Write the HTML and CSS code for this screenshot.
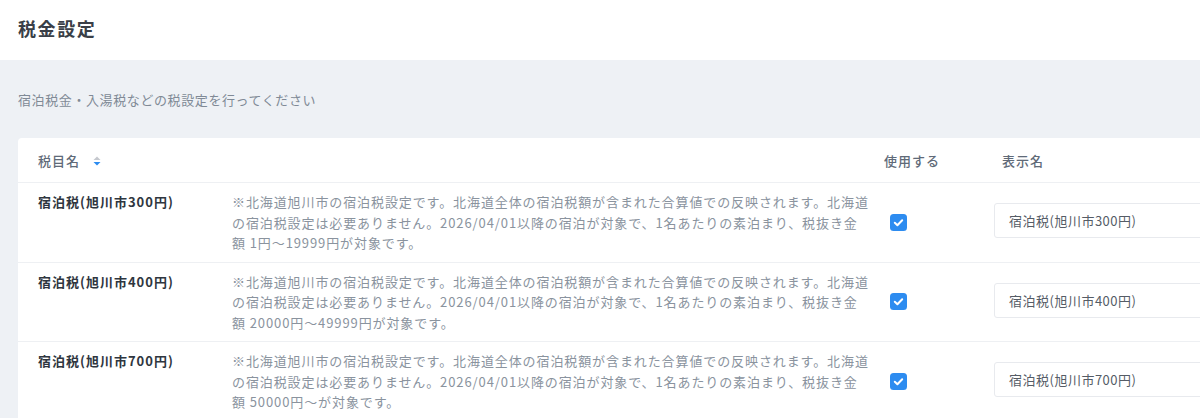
FILE: index.html
```html
<!DOCTYPE html>
<html lang="ja">
<head>
<meta charset="utf-8">
<title>税金設定</title>
<link rel="stylesheet" href="styles.css">
</head>
<body>
<header class="page-head">
  <h1 class="page-title">税金設定</h1>
</header>
<main class="content">
  <p class="lead">宿泊税金・入湯税などの税設定を行ってください</p>
  <section class="card">
    <div class="row head">
      <div class="th th-name">税目名
        <svg class="sort" width="8" height="10" viewBox="0 0 8 10"><path d="M4 0.5 L7.5 4 L0.5 4 Z" fill="#c5c8ce"/><path d="M0.5 6 L7.5 6 L4 9.5 Z" fill="#2d8cf0"/></svg>
      </div>
      <div class="th"></div>
      <div class="th">使用する</div>
      <div class="th th-disp">表示名</div>
    </div>

    <div class="row">
      <div class="name">宿泊税(旭川市300円)</div>
      <div class="desc">※北海道旭川市の宿泊税設定です。北海道全体の宿泊税額が含まれた合算値での反映されます。北海道の宿泊税設定は必要ありません。2026/04/01以降の宿泊が対象で、1名あたりの素泊まり、税抜き金額 1円〜19999円が対象です。</div>
      <div class="use"><span class="check"><svg width="17" height="17" viewBox="0 0 17 17"><rect width="17" height="17" rx="3.5" fill="#2d8cf0"/><path d="M4.8 8.8 L7.4 11.2 L12.2 6.2" fill="none" stroke="#fff" stroke-width="2" stroke-linecap="round" stroke-linejoin="round"/></svg></span></div>
      <div class="disp"><div class="input">宿泊税(旭川市300円)</div></div>
    </div>

    <div class="row">
      <div class="name">宿泊税(旭川市400円)</div>
      <div class="desc">※北海道旭川市の宿泊税設定です。北海道全体の宿泊税額が含まれた合算値での反映されます。北海道の宿泊税設定は必要ありません。2026/04/01以降の宿泊が対象で、1名あたりの素泊まり、税抜き金額 20000円〜49999円が対象です。</div>
      <div class="use"><span class="check"><svg width="17" height="17" viewBox="0 0 17 17"><rect width="17" height="17" rx="3.5" fill="#2d8cf0"/><path d="M4.8 8.8 L7.4 11.2 L12.2 6.2" fill="none" stroke="#fff" stroke-width="2" stroke-linecap="round" stroke-linejoin="round"/></svg></span></div>
      <div class="disp"><div class="input">宿泊税(旭川市400円)</div></div>
    </div>

    <div class="row">
      <div class="name">宿泊税(旭川市700円)</div>
      <div class="desc">※北海道旭川市の宿泊税設定です。北海道全体の宿泊税額が含まれた合算値での反映されます。北海道の宿泊税設定は必要ありません。2026/04/01以降の宿泊が対象で、1名あたりの素泊まり、税抜き金額 50000円〜が対象です。</div>
      <div class="use"><span class="check"><svg width="17" height="17" viewBox="0 0 17 17"><rect width="17" height="17" rx="3.5" fill="#2d8cf0"/><path d="M4.8 8.8 L7.4 11.2 L12.2 6.2" fill="none" stroke="#fff" stroke-width="2" stroke-linecap="round" stroke-linejoin="round"/></svg></span></div>
      <div class="disp"><div class="input">宿泊税(旭川市700円)</div></div>
    </div>
  </section>
</main>
</body>
</html>
```

FILE: styles.css
```css
* { box-sizing: border-box; }
html, body {
  margin: 0;
  padding: 0;
  overflow: hidden;
  width: 1200px;
  height: 418px;
}
body {
  font-family: "Noto Sans CJK JP", "Noto Sans", sans-serif;
  background: #eef1f5;
  color: #333;
}
.page-head {
  height: 60px;
  background: #fff;
  display: flex;
  align-items: center;
  padding: 0 18px 5px;
}
.page-title {
  margin: 0;
  font-size: 18px;
  font-weight: 700;
  letter-spacing: 1.6px;
  color: #3a3f47;
  line-height: 24px;
}
.content {
  padding: 30px 0 0 18px;
}
.lead {
  margin: 0 0 28px;
  font-size: 13px;
  line-height: 20px;
  letter-spacing: 0.6px;
  color: #808a96;
}
.card {
  width: 1260px;
  background: #fff;
  border-radius: 4px 0 0 0;
}
.row {
  display: grid;
  grid-template-columns: 194px 652px 110px 1fr;
  padding-left: 20px;
  border-bottom: 1px solid #eef0f3;
  align-items: center;
}
.row.head {
  height: 45px;
}
.th {
  font-size: 13px;
  letter-spacing: 1px;
  color: #606a78;
  font-weight: 500;
  display: flex;
  align-items: center;
}
.th-disp { padding-left: 8px; }
.sort { margin-left: 13px; margin-top: 1px; }
.name, .desc {
  align-self: start;
  font-size: 13px;
  line-height: 20.5px;
  padding: 9px 0 8px;
}
.name {
  font-weight: 700;
  letter-spacing: 1px;
  color: #2f3640;
}
.desc {
  color: #8a939e;
  letter-spacing: 0.9px;
  width: 637px;
}
.use { padding-left: 6px; display: flex; }
.check { display: inline-flex; width: 17px; height: 17px; }
.disp { padding: 0; }
.input {
  width: 240px;
  height: 35px;
  border: 1px solid #e8eaee;
  border-radius: 3px;
  padding: 0 14px;
  display: flex;
  align-items: center;
  font-size: 13px;
  letter-spacing: 0.5px;
  color: #555c66;
  background: #fff;
  margin-top: -3px;
}
```
